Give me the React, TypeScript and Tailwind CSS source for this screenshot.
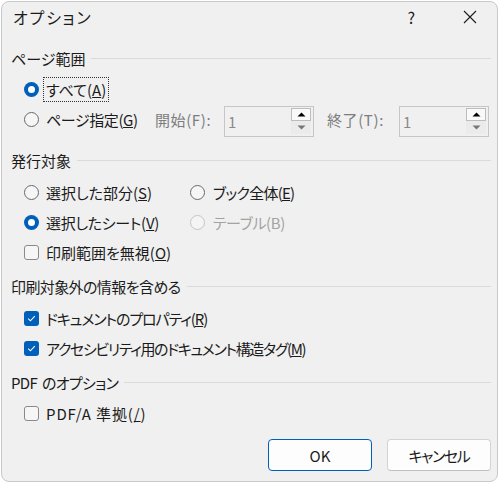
import React from "react";

const font = "[font-family:'Noto_Sans_CJK_JP',sans-serif] [font-feature-settings:'palt']";

function Radio({ checked, disabled }: { checked?: boolean; disabled?: boolean }) {
  if (checked) {
    return (
      <span className="w-[15px] h-[15px] rounded-full bg-[#005fb8] flex items-center justify-center shrink-0">
        <span className="w-[7px] h-[7px] rounded-full bg-white" />
      </span>
    );
  }
  return (
    <span
      className={
        "w-[15px] h-[15px] rounded-full border shrink-0 " +
        (disabled ? "border-[#c4c4c4] bg-[#f4f4f4]" : "border-[#6a6a6a] bg-[#f6f6f6]")
      }
    />
  );
}

function Check({ checked }: { checked?: boolean }) {
  if (checked) {
    return (
      <span className="w-[15px] h-[15px] rounded-[3px] bg-[#005fb8] flex items-center justify-center shrink-0">
        <svg width="11" height="11" viewBox="0 0 11 11">
          <path d="M2.2 5.6 L4.4 7.8 L8.8 3.2" fill="none" stroke="white" strokeWidth="1.1" />
        </svg>
      </span>
    );
  }
  return <span className="w-[15px] h-[15px] rounded-[3px] border border-[#8a8a8a] bg-[#f6f6f6] shrink-0" />;
}

function Header({ children, className = "" }: { children: React.ReactNode; className?: string }) {
  return (
    <div className="h-[20px] flex items-center pl-[9px] pr-[6px]">
      <span className={"text-[15px] text-[#1b1b1b] leading-none whitespace-nowrap " + className}>{children}</span>
      <span className="flex-1 h-px bg-[#dadada] ml-[6px]" />
    </div>
  );
}

function Row({ children, className = "" }: { children: React.ReactNode; className?: string }) {
  return <div className={"h-[30px] flex items-center pl-[22px] " + className}>{children}</div>;
}

function Label({ children, className = "" }: { children: React.ReactNode; className?: string }) {
  return <span className={"text-[15px] leading-none whitespace-nowrap text-[#1b1b1b] shrink-0 " + className}>{children}</span>;
}

function Spin() {
  return (
    <div className="w-[90px] h-[31px] border border-[#c6c6c6] bg-[#f0f0f0] flex items-center justify-between pl-[3px] pr-[2px] mt-[4px] shrink-0">
      <span className="text-[15px] text-[#8a8a8a] leading-none">1</span>
      <div className="flex flex-col w-[20px]">
        <div className="h-[13px] border border-[#bdbdbd] bg-[#f9f9f9] flex items-center justify-center">
          <svg width="9" height="5" viewBox="0 0 9 5"><path d="M0.5 4.5 L4.5 0.5 L8.5 4.5 Z" fill="#000" /></svg>
        </div>
        <div className="h-[13px] bg-[#ebebeb] flex items-center justify-center">
          <svg width="9" height="5" viewBox="0 0 9 5"><path d="M0.5 0.5 L4.5 4.5 L8.5 0.5 Z" fill="#777" /></svg>
        </div>
      </div>
    </div>
  );
}

export default function App() {
  return (
    <div className={"w-[500px] h-[484px] bg-white p-[1px] " + font}>
      <div className="w-[497px] h-[481px] border border-[#c9c9c9] rounded-[8px] bg-[#f0f0f0] flex flex-col">
        {/* title bar */}
        <div className="h-[30px] flex items-center pl-[11px] relative">
          <span className="text-[16px] text-[#1b1b1b] leading-none tracking-[1.8px]">オプション</span>
          <span className="ml-auto mr-[48px] text-[16px] text-[#1b1b1b] leading-none">?</span>
          <svg className="mr-[20px]" width="14" height="14" viewBox="0 0 14 14">
            <path d="M1 1 L13 13 M13 1 L1 13" stroke="#1b1b1b" strokeWidth="1.1" />
          </svg>
        </div>

        <div className="h-[16px]" />
        <Header>ページ範囲</Header>
        <div className="h-[6px]" />
        <Row>
          <Radio checked />
          <span className="ml-[5px] px-[2px] h-[23px] flex items-center outline-1 outline-dotted outline-[#333]">
            <Label>
              すべて(<u>A</u>)
            </Label>
          </span>
        </Row>
        <Row>
          <Radio />
          <Label className="ml-[7px] w-[109px] tracking-[-0.4px]">
            ページ指定(<u>G</u>)
          </Label>
          <Label className="text-[#7d7d7d] w-[69px] tracking-[0.6px]">開始(F):</Label>
          <Spin />
          <Label className="text-[#7d7d7d] ml-[13px] w-[72px] tracking-[0.6px]">終了(T):</Label>
          <Spin />
        </Row>

        <div className="h-[16px]" />
        <Header>発行対象</Header>
        <div className="h-[7px]" />
        <Row>
          <Radio />
          <Label className="ml-[7px] w-[144px]">
            選択した部分(<u>S</u>)
          </Label>
          <Radio />
          <Label className="ml-[8px] tracking-[-0.75px]">
            ブック全体(<u>E</u>)
          </Label>
        </Row>
        <Row>
          <Radio checked />
          <Label className="ml-[7px] w-[144px] tracking-[-0.3px]">
            選択したシート(<u>V</u>)
          </Label>
          <Radio disabled />
          <Label className="ml-[8px] text-[#a3a3a3] tracking-[-0.4px]">テーブル(B)</Label>
        </Row>
        <Row>
          <Check />
          <Label className="ml-[7px]">
            印刷範囲を無視(<u>O</u>)
          </Label>
        </Row>

        <div className="h-[9px]" />
        <Header className="tracking-[-0.6px]">印刷対象外の情報を含める</Header>
        <div className="h-[7px]" />
        <Row>
          <Check checked />
          <Label className="ml-[7px] tracking-[-1.1px]">
            ドキュメントのプロパティ(<u>R</u>)
          </Label>
        </Row>
        <Row>
          <Check checked />
          <Label className="ml-[7px] tracking-[-1.35px]">
            アクセシビリティ用のドキュメント構造タグ(<u>M</u>)
          </Label>
        </Row>

        <div className="h-[9px]" />
        <Header className="tracking-[-0.7px]">
          PDF<span className="inline-block w-[5px]" />のオプション
        </Header>
        <div className="h-[6px]" />
        <Row>
          <Check />
          <Label className="ml-[7px] tracking-[0.9px]">
            PDF/A 準拠(<u>/</u>)
          </Label>
        </Row>

        <div className="h-[11px]" />
        <div className="flex justify-end gap-[15px] pr-[6px]">
          <button className="w-[104px] h-[32px] rounded-[4px] border border-[#005fb8] bg-[#fdfdfd] text-[15px] text-[#1b1b1b] leading-none">
            OK
          </button>
          <button className="w-[104px] h-[32px] rounded-[4px] border border-[#d3d3d3] border-b-[#c0c0c0] bg-[#fdfdfd] text-[15px] text-[#1b1b1b] leading-none tracking-[-1.4px]">
            キャンセル
          </button>
        </div>
      </div>
    </div>
  );
}
